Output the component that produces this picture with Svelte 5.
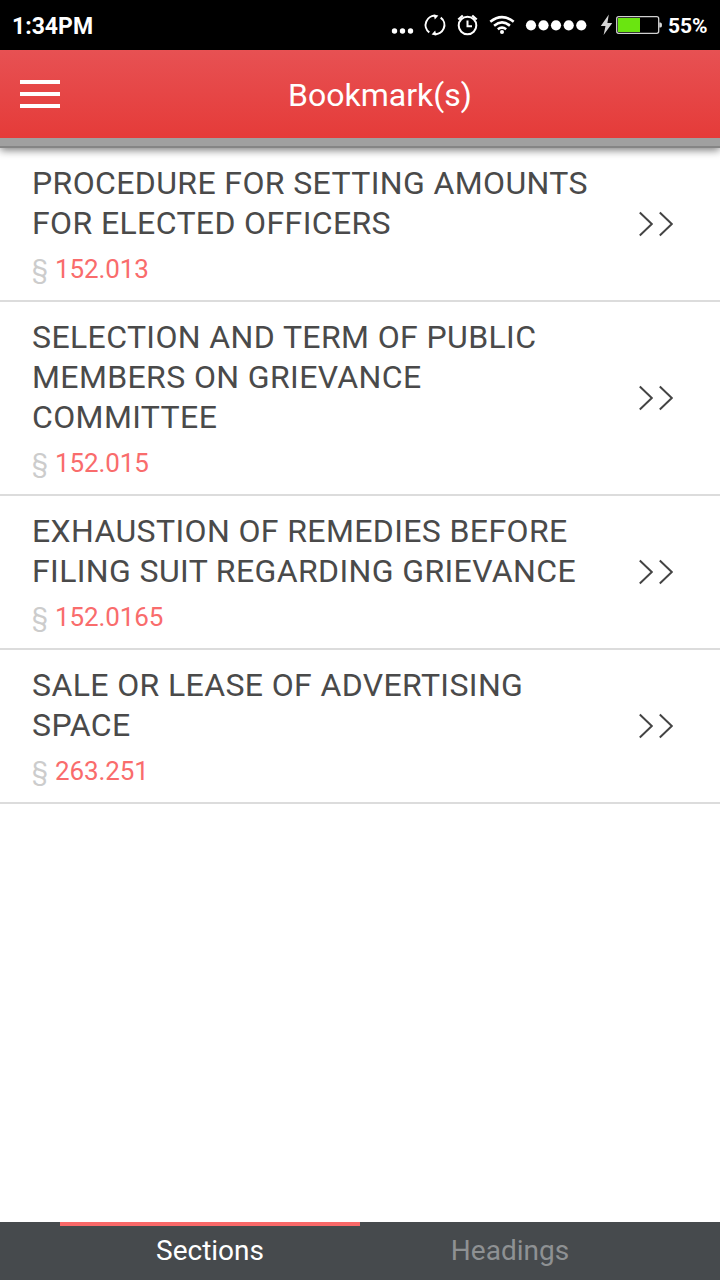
<script lang="ts">
  const bookmarks = [
    { title: 'PROCEDURE FOR SETTING AMOUNTS FOR ELECTED OFFICERS', section: '152.013' },
    { title: 'SELECTION AND TERM OF PUBLIC MEMBERS ON GRIEVANCE COMMITTEE', section: '152.015' },
    { title: 'EXHAUSTION OF REMEDIES BEFORE FILING SUIT REGARDING GRIEVANCE', section: '152.0165' },
    { title: 'SALE OR LEASE OF ADVERTISING SPACE', section: '263.251' }
  ];

  let activeTab = $state('Sections');
</script>

<div class="screen">
  <div class="status-bar">
    <span class="clock">1:34PM</span>
    <svg class="status-icons" width="276" height="50" viewBox="386 0 276 50" fill="none" stroke="#fff">
      <g fill="#fff" stroke="none">
        <circle cx="394.5" cy="31" r="2.7" />
        <circle cx="402.5" cy="31" r="2.7" />
        <circle cx="410.5" cy="31" r="2.7" />
      </g>
      <!-- sync -->
      <g stroke-width="2">
        <path d="M429.3 32.4A9.2 9.2 0 0 1 436 15.9M440.7 17.6A9.2 9.2 0 0 1 434 34.1" />
        <path d="M433.6 14.6L438.4 15.6L434.8 19.6ZM436.4 35.4L431.6 34.4L435.2 30.4Z" fill="#fff" stroke="none" />
      </g>
      <!-- alarm -->
      <g stroke-width="2">
        <circle cx="467.5" cy="25.5" r="8.8" />
        <path d="M467.5 20.5V26.3H472" />
        <path d="M458.3 19.5L462.8 15.5M476.7 19.5L472.2 15.5" stroke-width="2.3" />
      </g>
      <!-- wifi -->
      <g stroke-width="2.6">
        <path d="M490.3 21.8Q502 12.5 513.7 21.8" />
        <path d="M494.1 25.7Q502 19.2 509.9 25.7" />
        <path d="M497.8 29.2Q502 26 506.2 29.2" />
        <circle cx="502" cy="32" r="2" fill="#fff" stroke="none" />
      </g>
      <g fill="#fff" stroke="none">
        {#each [531, 543.5, 556, 568.7, 581.3] as cx}
          <circle {cx} cy="25.3" r="5.1" />
        {/each}
      </g>
      <!-- battery -->
      <path d="M608.8 14.5L600.8 26H605.5L603.6 35L612.3 23H607.4Z" fill="#d4d4d4" stroke="none" />
      <rect x="616.7" y="16.7" width="42" height="16.6" rx="2" stroke="#d0d0d0" stroke-width="1.3" />
      <rect x="618" y="18" width="22" height="14" fill="#6ae510" stroke="none" />
      <path d="M659.3 22.5H660.5Q662 22.5 662 25T660.5 27.5H659.3Z" fill="#d8d8d8" stroke="none" />
    </svg>
    <span class="percent">55%</span>
  </div>

  <header>
    <button class="menu" aria-label="Menu">
      <span></span>
      <span></span>
      <span></span>
    </button>
    <h1>Bookmark(s)</h1>
  </header>
  <div class="strip"></div>

  <ul class="list">
    {#each bookmarks as bookmark}
      <li class="item">
        <div class="text">
          <div class="title">{bookmark.title}</div>
          <div class="ref"><span class="sign">§</span><span>{bookmark.section}</span></div>
        </div>
        <svg class="chevrons" width="38" height="26" viewBox="0 0 38 26" fill="none" stroke="#444" stroke-width="2">
          <path d="M1.8 1.5L13.8 13L1.8 24.5M21.8 1.5L33.8 13L21.8 24.5" />
        </svg>
      </li>
    {/each}
  </ul>

  <nav>
    {#each ['Sections', 'Headings'] as tab}
      <button class="tab" class:active={activeTab === tab} onclick={() => (activeTab = tab)}>{tab}</button>
    {/each}
  </nav>
</div>

<style>
  :global(body) {
    margin: 0;
  }

  .screen {
    display: flex;
    flex-direction: column;
    width: 720px;
    height: 1280px;
    overflow: hidden;
    background: #fff;
    font-family: Roboto, sans-serif;
  }

  button {
    padding: 0;
    border: 0;
    background: none;
    font: inherit;
  }

  .status-bar {
    display: flex;
    align-items: center;
    height: 50px;
    padding: 0 12px;
    box-sizing: border-box;
    background: #000;
    color: #fff;
    font-size: 22px;
    font-weight: 700;
  }

  .clock {
    padding-top: 2px;
    font-size: 23px;
  }

  .status-icons {
    margin-left: auto;
  }

  .percent {
    width: 40px;
    padding-top: 2px;
    margin-left: 6px;
    font-size: 21px;
    white-space: nowrap;
  }

  header {
    position: relative;
    z-index: 1;
    display: flex;
    align-items: center;
    height: 88px;
    padding-left: 20px;
    background: linear-gradient(#e75153, #e53b39);
    color: #fff;
  }

  .menu {
    display: grid;
    gap: 8px;
    width: 40px;
  }

  .menu span {
    height: 4px;
    background: #fff;
  }

  h1 {
    flex: 1;
    margin: 0 20px 0 0;
    padding-top: 2px;
    font-size: 32px;
    font-weight: 400;
    text-align: center;
  }

  .strip {
    height: 10px;
    background: linear-gradient(#a0a0a0 8px, #858585 8px);
    box-shadow: 0 2px 8px rgba(0, 0, 0, 0.55);
  }

  .list {
    flex: 1;
    margin: 0;
    padding: 0;
    list-style: none;
  }

  .item {
    display: flex;
    align-items: center;
    justify-content: space-between;
    padding: 15px 44px 11px 32px;
    border-bottom: 2px solid #dcdcdc;
  }

  .text {
    width: 570px;
  }

  .title {
    color: #4a4a4a;
    font-size: 32px;
    letter-spacing: 0.38px;
    line-height: 40px;
  }

  .ref {
    display: flex;
    align-items: center;
    gap: 8px;
    height: 46px;
    padding-top: 6px;
    box-sizing: border-box;
    color: #f96c6c;
    font-size: 26px;
    letter-spacing: -0.1px;
    line-height: 40px;
  }

  .sign {
    width: 15px;
    color: #ccc;
  }

  .chevrons {
    margin-bottom: 4px;
  }

  nav {
    display: flex;
    height: 58px;
    padding: 0 60px;
    background: #464a4d;
  }

  .tab {
    flex: 1;
    padding-bottom: 6px;
    border-top: 4px solid transparent;
    color: #8e9193;
    font-size: 28px;
  }

  .tab.active {
    border-color: #f96868;
    color: #fff;
  }
</style>
